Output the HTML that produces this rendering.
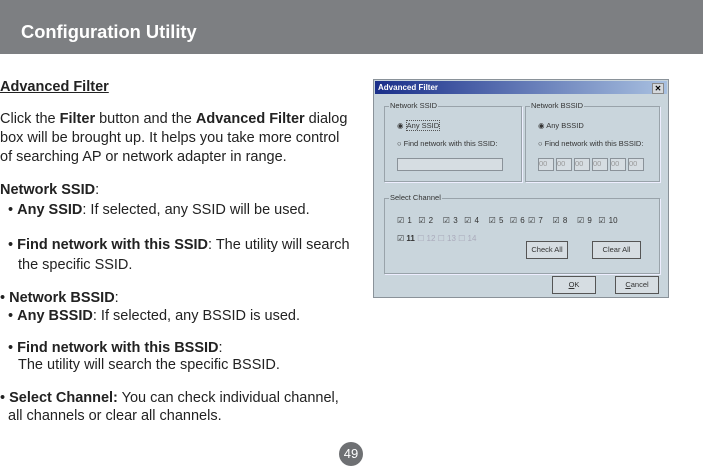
<!DOCTYPE html>
<html><head><style>
body{margin:0;width:703px;height:464px;position:relative;background:#fff;font-family:"Liberation Sans",sans-serif;overflow:hidden}
.hd{position:absolute;left:0;top:0;width:703px;height:54px;background:#7d7f82}
.hd span{position:absolute;left:21px;top:21px;color:#fff;font-weight:bold;font-size:18.3px}
.l{position:absolute;left:0;font-size:14.5px;color:#222;white-space:nowrap;line-height:16px}
.d{position:absolute;left:373px;top:79px;width:296px;height:219px;background:#c9d5dc;border:1px solid #8a9299;box-sizing:border-box;font-size:7.5px;color:#333}
.tb{position:absolute;left:1px;top:1px;right:1px;height:13px;background:linear-gradient(90deg,#1a2f8a,#a8c0e0);color:#fff;font-weight:bold;font-size:8px;line-height:13px;padding-left:3px}
.x{position:absolute;right:3px;top:2px;width:10px;height:9px;background:#d4d8dc;color:#000;font-size:8px;line-height:9px;text-align:center;border:1px solid #888}
.g{position:absolute;border:1px solid #99a3aa;box-shadow:1px 1px 0 #eef}
.g>b{position:absolute;top:-6px;left:4px;background:#c9d5dc;font-weight:normal;padding:0 1px}
.a{position:absolute;white-space:nowrap}
.in{position:absolute;background:#d6dde2;border:1px solid #8a9299}
.btn{position:absolute;background:#d6dde2;border:1px solid #555;text-align:center;line-height:16px}
</style></head><body>
<div class="hd"><span>Configuration Utility</span></div>
<div class="l" style="top:79px;font-weight:bold;text-decoration:underline">Advanced Filter</div>
<div class="l" style="top:111px">Click the <b>Filter</b> button and the <b>Advanced Filter</b> dialog</div>
<div class="l" style="top:130px">box will be brought up. It helps you take more control</div>
<div class="l" style="top:149px">of searching AP or network adapter in range.</div>
<div class="l" style="top:182px"><b>Network SSID</b>:</div>
<div class="l" style="top:202px;left:8px">• <b>Any SSID</b>: If selected, any SSID will be used.</div>
<div class="l" style="top:237px;left:8px">• <b>Find network with this SSID</b>: The utility will search</div>
<div class="l" style="top:257px;left:18px">the specific SSID.</div>
<div class="l" style="top:290px">• <b>Network BSSID</b>:</div>
<div class="l" style="top:308px;left:8px">• <b>Any BSSID</b>: If selected, any BSSID is used.</div>
<div class="l" style="top:340px;left:8px">• <b>Find network with this BSSID</b>:</div>
<div class="l" style="top:357px;left:18px">The utility will search the specific BSSID.</div>
<div class="l" style="top:390px">• <b>Select Channel:</b> You can check individual channel,</div>
<div class="l" style="top:408px;left:8px">all channels or clear all channels.</div>
<div style="position:absolute;left:339px;top:442px;width:24px;height:24px;border-radius:50%;background:#6e7073;color:#fff;font-size:13px;line-height:24px;text-align:center">49</div>

<div class="d">
<div class="tb">Advanced Filter<div class="x">✕</div></div>
<div class="g" style="left:10px;top:26px;width:136px;height:74px"><b>Network SSID</b>
<div class="a" style="left:12px;top:14px">◉ <span style="border:1px dotted #555">Any SSID</span></div>
<div class="a" style="left:12px;top:32px">○ Find network with this SSID:</div>
<div class="in" style="left:12px;top:51px;width:104px;height:11px"></div></div>
<div class="g" style="left:151px;top:26px;width:133px;height:74px"><b>Network BSSID</b>
<div class="a" style="left:12px;top:14px">◉ Any BSSID</div>
<div class="a" style="left:12px;top:32px">○ Find network with this BSSID:</div>
<div class="a" style="left:12px;top:51px;color:#999">
<span class="in" style="position:relative;display:inline-block;width:14px;height:11px;margin-right:2px">00</span><span class="in" style="position:relative;display:inline-block;width:14px;height:11px;margin-right:2px">00</span><span class="in" style="position:relative;display:inline-block;width:14px;height:11px;margin-right:2px">00</span><span class="in" style="position:relative;display:inline-block;width:14px;height:11px;margin-right:2px">00</span><span class="in" style="position:relative;display:inline-block;width:14px;height:11px;margin-right:2px">00</span><span class="in" style="position:relative;display:inline-block;width:14px;height:11px">00</span></div></div>
<div class="g" style="left:10px;top:118px;width:274px;height:74px"><b>Select Channel</b>
<div class="a" style="left:12px;top:17px;word-spacing:1px;font-size:8px">☑ 1 &nbsp;☑ 2 &nbsp;&nbsp;☑ 3 &nbsp;☑ 4 &nbsp;&nbsp;☑ 5 &nbsp;☑ 6 ☑ 7 &nbsp;&nbsp;☑ 8 &nbsp;&nbsp;☑ 9 &nbsp;☑ 10</div>
<div class="a" style="left:12px;top:35px;font-size:8px">☑ <b>11</b> <span style="color:#aab">☐ 12 ☐ 13 ☐ 14</span></div>
<div class="btn" style="left:141px;top:42px;width:40px">Check All</div>
<div class="btn" style="left:207px;top:42px;width:47px">Clear All</div></div>
<div class="btn" style="left:178px;top:196px;width:42px"><u>O</u>K</div>
<div class="btn" style="left:241px;top:196px;width:42px"><u>C</u>ancel</div>
</div>
</body></html>
